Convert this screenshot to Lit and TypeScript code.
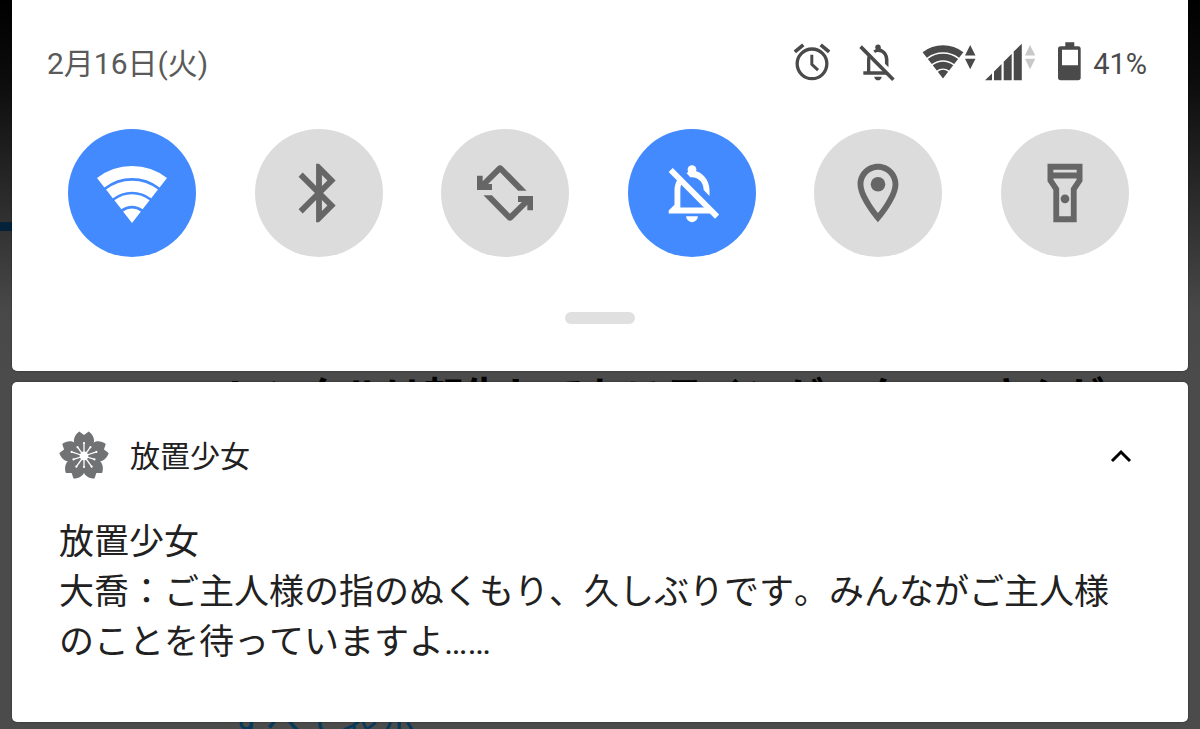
import { LitElement, html, css, svg, type TemplateResult } from "lit";
import { customElement, property, state } from "lit/decorators.js";

const wifiShape = svg`
  <g fill="none" stroke="currentColor">
    <path stroke-width="12" d="M4.7 25.7A51 51 0 0 1 67.3 25.7" />
    <path stroke-width="11" d="M13.4 36.9A36.8 36.8 0 0 1 58.6 36.9" />
    <path stroke-width="11.4" d="M21.9 47.8A23 23 0 0 1 50.1 47.8" />
  </g>
  <path fill="currentColor" d="M36 66L27.1 54.5A14.5 14.5 0 0 1 44.9 54.5Z" />`;

const tileIcons: Record<string, TemplateResult> = {
  wifi: html`<svg viewBox="1 1 70 70" aria-hidden="true">${wifiShape}</svg>`,
  bluetooth: html`<svg viewBox="0 0 24 24" aria-hidden="true">
    <path d="M17.71 7.71L12 2h-1v7.59L6.41 5 5 6.41 10.59 12 5 17.59 6.41 19 11 14.41V22h1l5.71-5.71-4.3-4.29 4.3-4.29zM13 5.83l1.88 1.88L13 9.59V5.83zm1.88 10.46L13 18.17v-3.76l1.88 1.88z" />
  </svg>`,
  rotate: html`<svg viewBox="0 0 24 24" aria-hidden="true">
    <path d="M19.4 11.2L11.2 2.9Q10.3 2.1 9.4 2.9L4.34 8V6.06H2.4V11H7.54V8.95H6.2L10.3 4.9L16.5 11.2Z" />
    <path d="M4.6 12.8L12.8 21.1Q13.7 21.9 14.6 21.1L19.66 16V17.94H21.6V13H16.46V15.05H17.8L13.7 19.1L7.5 12.8Z" />
  </svg>`,
  silent: html`<svg viewBox="0 0 24 24" aria-hidden="true">
    <circle cx="12" cy="4" r="1.5" />
    <path d="M10.1 5.1L12 4.2C15.5 4.6 18 7.4 18 11V13L16 11C16 8.5 14.3 6.6 12 6.6L11.4 6.6Z" />
    <path d="M4 19V18L6 16V11C6 9.8 6.3 8.6 6.9 7.5L8.4 9C8.1 9.6 8 10.3 8 11V17H16.9L18.9 19Z" />
    <path d="M4 4.8L5.4 3.4L21.3 19.4L19.9 20.8Z" />
    <path d="M12 22c1.1 0 2-.9 2-2h-4c0 1.1.9 2 2 2z" />
  </svg>`,
  location: html`<svg viewBox="0 0 24 24" aria-hidden="true">
    <path d="M12 2C8.13 2 5 5.13 5 9c0 5.25 7 13 7 13s7-7.75 7-13c0-3.87-3.13-7-7-7zM7 9c0-2.76 2.24-5 5-5s5 2.24 5 5c0 2.88-2.88 7.19-5 9.88C9.92 16.21 7 11.85 7 9z" />
    <circle cx="12" cy="9" r="2.5" />
  </svg>`,
  flashlight: html`<svg viewBox="0 0 24 24" aria-hidden="true">
    <path d="M18 2H6v6l2 3v11h8V11l2-3V2zM16 4v1H8V4h8zM14 10.4V20h-4v-9.61l-2-3V7h8v.39l-2 3.01z" />
    <circle cx="12" cy="14" r="1.5" />
  </svg>`,
};

@customElement("quick-tile")
class QuickTile extends LitElement {
  @property() icon = "wifi";
  @property() label = "";
  @property({ type: Boolean }) active = false;

  static styles = css`
    :host {
      display: block;
    }
    .tile {
      display: grid;
      place-items: center;
      width: 128px;
      height: 128px;
      padding: 0;
      border: 0;
      border-radius: 50%;
      background: #dcdcdc;
      color: #666;
      cursor: pointer;
    }
    .tile[aria-pressed="true"] {
      background: #448aff;
      color: #fff;
    }
    .tile svg {
      display: block;
      width: 70px;
      height: 70px;
      fill: currentColor;
    }
  `;

  render() {
    return html`<button
      class="tile"
      type="button"
      aria-label=${this.label}
      aria-pressed=${this.active ? "true" : "false"}
      @click=${() => (this.active = !this.active)}
    >
      ${tileIcons[this.icon]}
    </button>`;
  }
}

@customElement("status-icons")
class StatusIcons extends LitElement {
  static styles = css`
    :host {
      display: flex;
      align-items: flex-start;
      color: #4a4a4a;
      font: 29px/44px Roboto, sans-serif;
    }
    svg {
      display: block;
      height: 44px;
      fill: currentColor;
    }
    .alarm,
    .bell {
      width: 44px;
      margin-right: 22px;
    }
    .wifi {
      width: 54px;
      margin-right: 9px;
    }
    .signal {
      width: 51px;
      margin-right: 22px;
    }
    .battery {
      width: 23px;
      margin-right: 12px;
    }
    .idle {
      fill: #c8c8c8;
    }
    .level {
      padding-top: 2px;
    }
  `;

  render() {
    return html`
      <svg class="alarm" viewBox="0 0 24 24" aria-hidden="true">
        <path d="M22 5.72l-4.6-3.86-1.29 1.53 4.6 3.86L22 5.72zM7.88 3.39L6.6 1.86 2 5.71l1.29 1.53 4.59-3.85z" />
        <circle cx="12" cy="13" r="8.1" fill="none" stroke="currentColor" stroke-width="1.8" />
        <path d="M11.9 8V13.3L15.3 16.4" fill="none" stroke="currentColor" stroke-width="1.6" />
      </svg>
      <svg class="bell" viewBox="0 0 24 24" aria-hidden="true">
        <circle cx="12" cy="4" r="1.5" />
        <path d="M9.4 5.9L12 4.2C15.4 4.8 17.7 7.4 17.7 10.8V14.8L15.8 13V11C15.8 8.3 14.3 6.6 12 6.6C11.4 6.6 11 6.7 10.5 7.1Z" />
        <path d="M4 18.9V17H6V11C6 9.8 6.3 8.6 6.7 7.8L8.2 9.2C8 9.8 7.8 10.3 7.8 11V17H16L17.8 18.9Z" />
        <path d="M1.8 4.3L3.2 2.9L21.1 21L19.7 22.3Z" />
        <path d="M12 22c1.1 0 2-.9 2-2h-4c0 1.1.9 2 2 2z" />
      </svg>
      <svg class="wifi" viewBox="0 0 54 44" aria-hidden="true">
        <g transform="scale(.583)">${wifiShape}</g>
        <path d="M43 15.5L48.2 5L53.5 15.5ZM43 18.7L48.2 29.3L53.5 18.7Z" />
      </svg>
      <svg class="signal" viewBox="0 0 51 44" aria-hidden="true">
        <path d="M0 40.3L7 33.6V40.3ZM9 40.3V31.4L16.5 24V40.3ZM18.7 40.3V21.8L26.7 13.8V40.3ZM28.7 40.3V11.6L36.8 3.7V40.3Z" />
        <path class="idle" d="M40 15.5L45 5L50.3 15.5ZM40 18.7L45 29.3L50.3 18.7Z" />
      </svg>
      <svg class="battery" viewBox="0 0 23 44" aria-hidden="true">
        <path fill-rule="evenodd" d="M7.3 2.3H16.3V6.3H20Q22.7 6.3 22.7 9V37.6Q22.7 40.3 20 40.3H2.7Q0 40.3 0 37.6V9Q0 6.3 2.7 6.3H7.3ZM4 9.7V25.3H20V9.7Z" />
      </svg>
      <span class="level">41%</span>
    `;
  }
}

@customElement("app-root")
class AppRoot extends LitElement {
  @state() private expanded = true;

  private tiles = [
    { icon: "wifi", label: "Wi-Fi", active: true },
    { icon: "bluetooth", label: "Bluetooth", active: false },
    { icon: "rotate", label: "自動回転", active: false },
    { icon: "silent", label: "サイレント", active: true },
    { icon: "location", label: "位置情報", active: false },
    { icon: "flashlight", label: "ライト", active: false },
  ];

  static styles = css`
    :host {
      display: block;
      position: relative;
      box-sizing: border-box;
      min-height: 100vh;
      overflow: hidden;
      background: linear-gradient(#000 0, #0c0c0c 80px, #333 230px, #484848 310px, #4b4b4b 380px);
      font-family: Roboto, "Noto Sans CJK JP", sans-serif;
      font-kerning: none;
      color: #212121;
    }
    .dimmed {
      position: absolute;
      inset: 0;
      white-space: nowrap;
    }
    .accent {
      position: absolute;
      top: 222px;
      left: 0;
      width: 12px;
      height: 9px;
      background: #04223a;
    }
    .headline,
    .show-all {
      position: absolute;
      margin: 0;
      line-height: 40px;
    }
    .headline {
      top: 378px;
      left: 224px;
      font-size: 40px;
      font-weight: 700;
      color: #000;
    }
    .show-all {
      top: 702px;
      left: 228px;
      font-size: 38px;
      color: #06395a;
    }
    .shade {
      position: relative;
      display: grid;
      gap: 11px;
      padding: 0 12px 8px;
    }
    .card {
      background: #fff;
      border-radius: 0 0 5px 5px;
      box-shadow: 0 0 2px rgba(0, 0, 0, 0.5);
    }
    .notification {
      border-radius: 5px;
      padding: 48px 47px 54px;
    }
    .status {
      display: flex;
      justify-content: space-between;
      align-items: flex-start;
      padding: 40px 41px 0 35px;
    }
    .date {
      padding-top: 2px;
      font-size: 30px;
      line-height: 44px;
      color: #5a5a5a;
    }
    .tiles {
      display: flex;
      justify-content: space-between;
      padding: 43px 59px 0 56px;
    }
    .handle {
      display: block;
      width: 70px;
      height: 12px;
      margin: 55px auto 0;
      padding: 0;
      border: 0;
      border-radius: 6px;
      background: #e0e0e0;
    }
    .quick {
      padding-bottom: 47px;
    }
    .source {
      display: flex;
      align-items: center;
      height: 52px;
    }
    .flower {
      display: block;
      width: 50px;
      height: 50px;
      margin-right: 21px;
    }
    .app-name {
      flex: 1;
      padding-top: 2px;
      font-size: 30px;
      line-height: 44px;
    }
    .collapse {
      display: grid;
      place-items: center;
      width: 40px;
      height: 40px;
      padding: 0;
      border: 0;
      background: none;
      cursor: pointer;
    }
    .collapse svg {
      display: block;
      width: 22px;
      height: 16px;
    }
    .message {
      margin-top: 36px;
      padding-right: 12px;
      font-size: 35px;
      line-height: 50px;
    }
    .message h2,
    .message p {
      margin: 0;
      font-size: inherit;
      font-weight: 400;
    }
  `;

  render() {
    return html`
      <div class="dimmed" aria-hidden="true">
        <div class="accent"></div>
        <p class="headline">レンタルは転生してもステインゲーク　　さんが</p>
        <p class="show-all">すべて表示</p>
      </div>
      <main class="shade" lang="ja">
        <section class="card quick">
          <header class="status">
            <time class="date" datetime="2021-02-16">2月16日(火)</time>
            <status-icons></status-icons>
          </header>
          <div class="tiles">
            ${this.tiles.map(
              (t) => html`<quick-tile .icon=${t.icon} .label=${t.label} .active=${t.active}></quick-tile>`
            )}
          </div>
          <button class="handle" type="button" aria-label="クイック設定を開く"></button>
        </section>
        <article class="card notification">
          <header class="source">
            <svg class="flower" viewBox="-25 -25 50 50" aria-hidden="true">
              ${[0, 72, 144, 216, 288].map(
                (a) => svg`<path fill="#707274" transform="rotate(${a})"
                  d="M0 0L-9.5 -12.5C-11.2 -16 -9 -21.5 -4.7 -24.4L0 -21L4.7 -24.4C9 -21.5 11.2 -16 9.5 -12.5Z" />`
              )}
              ${[0, 36, 72, 108, 144, 180, 216, 252, 288, 324].map(
                (a, i) => svg`<g transform="rotate(${a})">
                  <path stroke="#fff" stroke-width="1.3" d="M0 0V${i % 2 ? -11 : -13}" />
                  <circle fill="#fff" cx="0" cy=${i % 2 ? -11 : -13} r="1.1" />
                </g>`
              )}
              <circle fill="#fff" r="4.4" />
            </svg>
            <span class="app-name">放置少女</span>
            <button
              class="collapse"
              type="button"
              aria-label="折りたたむ"
              aria-expanded=${this.expanded ? "true" : "false"}
              @click=${() => (this.expanded = !this.expanded)}
            >
              <svg viewBox="0 0 22 16" aria-hidden="true">
                <path fill="none" stroke="#000" stroke-width="3" d="M2 13L11 4L20 13" />
              </svg>
            </button>
          </header>
          <div class="message">
            <h2>放置少女</h2>
            ${this.expanded
              ? html`<p>大喬：ご主人様の指のぬくもり、久しぶりです。みんながご主人様のことを待っていますよ……</p>`
              : null}
          </div>
        </article>
      </main>
    `;
  }
}
